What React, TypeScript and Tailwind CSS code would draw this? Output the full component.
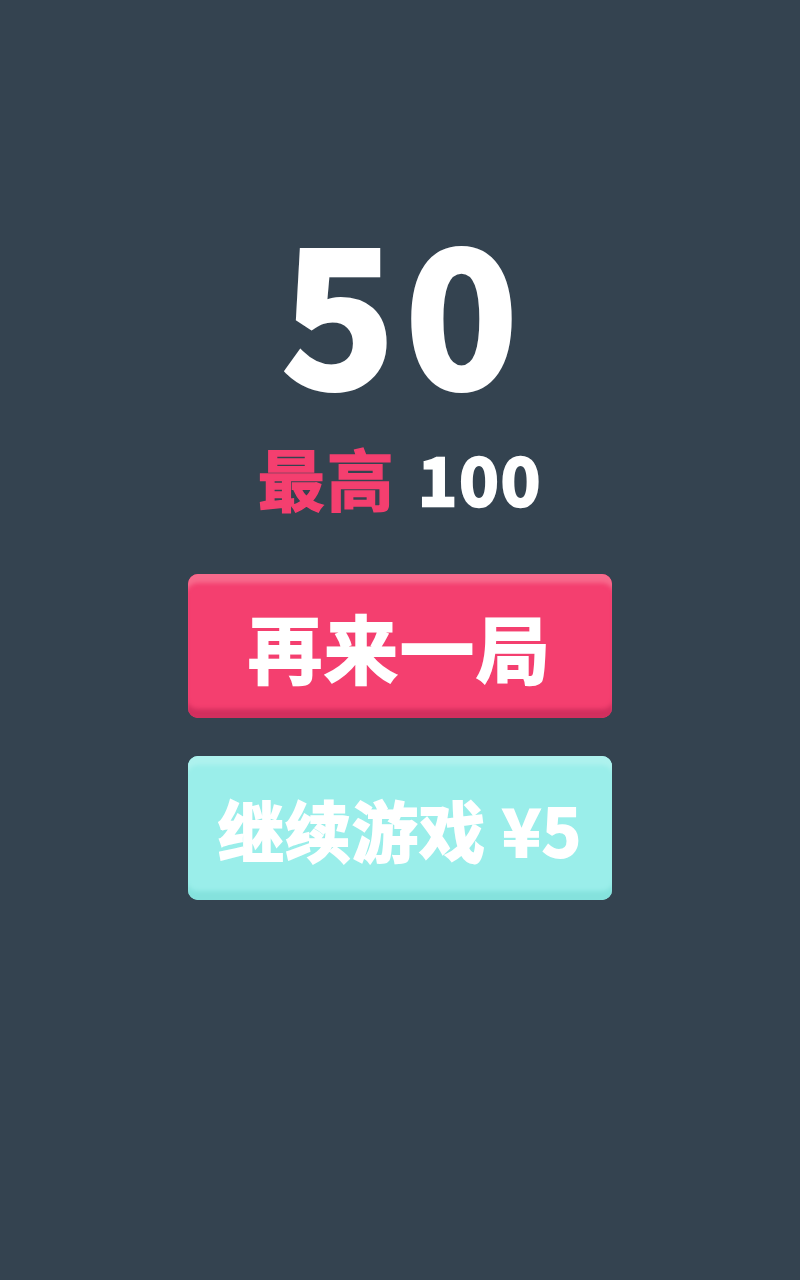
import React from "react";

const font = { fontFamily: '"Noto Sans CJK SC", "Noto Sans", sans-serif' };

function GameOver() {
  return (
    <div className="min-h-[1280px] w-full bg-[#344350] flex flex-col items-center pt-[211px]" style={font}>
      <div className="text-white font-bold text-[188px] leading-none tracking-[12px] pl-[12px] [-webkit-text-stroke:6px_white]">
        50
      </div>
      <div className="mt-[44px] flex items-baseline gap-[22px] font-bold text-[67px] leading-none">
        <span className="text-[#f43f6f] tracking-[2px] [-webkit-text-stroke:1.5px_#f43f6f]">最高</span>
        <span className="text-white tracking-[2px] [-webkit-text-stroke:2.5px_white]">100</span>
      </div>
      <div className="mt-[64px] flex flex-col gap-[38px]">
        <button className="w-[424px] h-[144px] rounded-[10px] bg-[#f43f6f] shadow-[inset_0_11px_4px_-2px_#f76a8c,inset_0_-11px_4px_-2px_#d22f5e] text-white font-bold text-[74px] leading-none tracking-[2px] [-webkit-text-stroke:2px_white] flex items-center justify-center">
          再来一局
        </button>
        <button className="w-[424px] h-[144px] rounded-[10px] bg-[#9aeeea] shadow-[inset_0_11px_4px_-2px_#aef2ee,inset_0_-11px_4px_-2px_#85e2dd] text-white font-bold text-[66px] leading-none tracking-[1px] [-webkit-text-stroke:2px_white] flex items-center justify-center">
          继续游戏 ¥5
        </button>
      </div>
    </div>
  );
}

export default function App() {
  return <GameOver />;
}
